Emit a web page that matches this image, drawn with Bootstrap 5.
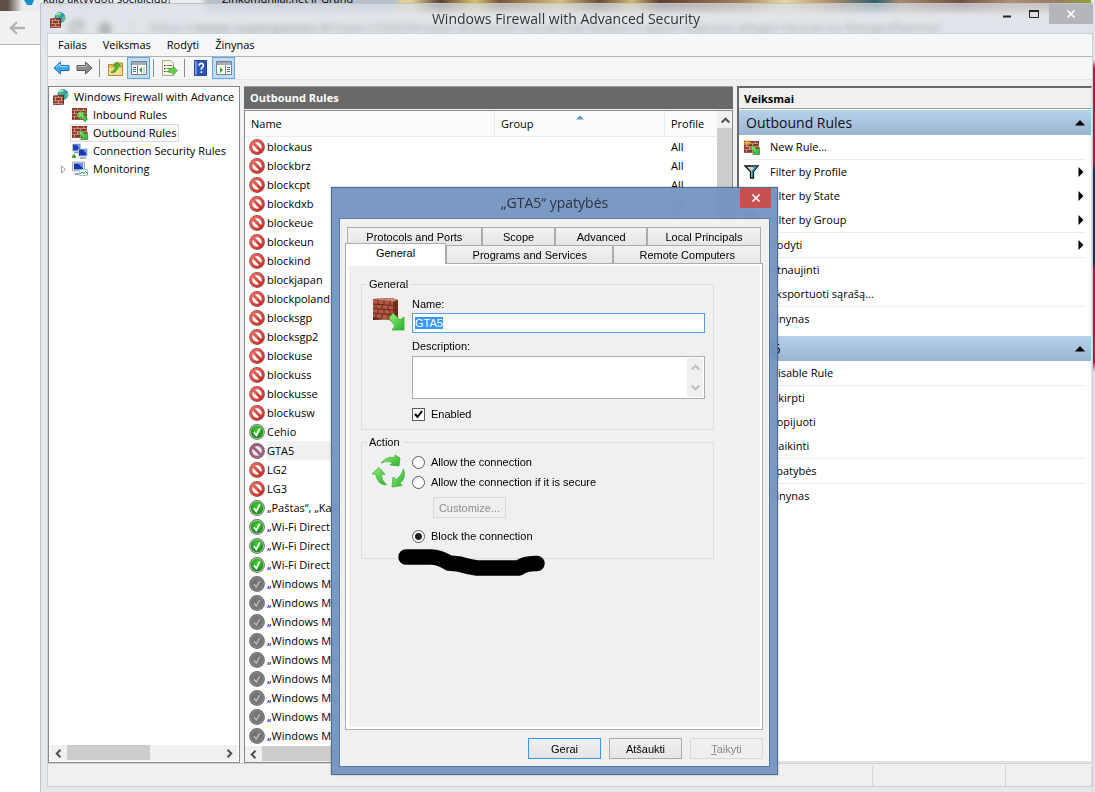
<!DOCTYPE html>
<html lang="lt">
<head>
<meta charset="utf-8">
<meta name="viewport" content="width=device-width, initial-scale=1">
<title>Windows Firewall with Advanced Security</title>
<link href="https://cdn.jsdelivr.net/npm/bootstrap@5.3.0/dist/css/bootstrap.min.css" rel="stylesheet">
<style>
  :root { --ui: "Open Sans", "Noto Sans", sans-serif; --dlg: "Liberation Sans", Arial, sans-serif; }
  body { min-height: 100vh; overflow: hidden; font-family: var(--ui); font-size: 11px; line-height: 18px; color: #000; background: #fff; }
  svg { display: block; flex: none; }
  button { font: inherit; color: inherit; }

  /* browser behind the console */
  .browser-back { position: absolute; inset: 0; overflow: hidden; background: #fff; }
  .wallpaper { height: 11px; background: linear-gradient(90deg, #5f5048 0 8px, #e9ecef 22px 200px, #b9bfca 208px 395px, #ddd193 402px 412px, #5a4234 440px, #d4c46a 475px, #7b5238 500px, #d8c27a 560px, #6b4a35 600px, #cdbb70 632px, #5d3e2e 660px, #a57f5c 740px, #e6d9ac 785px, #b08c68 830px, #2f6170 875px, #a98a6e 900px, #6d5342 960px, #ad9075 1010px, #9a7d60 1060px, #8fae2c 1095px); }
  .tab-names { line-height: 14px; height: 6px; margin-top: -11px; padding-left: 24px; font-size: 11px; gap: 50px; overflow: hidden; }
  .tab-names span { margin-top: -8px; }
  .tab-names svg + span { margin-left: -42px; }
  .browser-bar { margin-top: 5px; height: 34px; border-bottom: 1px solid #b5b5b5; background: #f1f1f2; padding-left: 9px; font-size: 14px; color: #222; white-space: nowrap; }
  .browser-bar .address { margin-left: 10px; }
  .browser-bar .bar-icons { margin-left: 42px; }
  .edge { position: absolute; right: 0; top: 0; bottom: 0; width: 4px; background: linear-gradient(#dfe2e8 0 60px, #b8174b 68px 160px, #0c2f6e 172px 262px, #b8174b 272px 362px, #dfe2e8 372px); }

  /* console window */
  .console { position: absolute; left: 40px; right: 2px; top: 3px; bottom: 0; border: solid #bfc4cb; border-width: 1px 0 0 1px; background: rgba(219, 223, 230, .72); backdrop-filter: blur(3px); padding: 0 0 5px 6px; }
  .console-title { height: 29px; font-size: 14px; line-height: 29px; color: #333; padding-left: 3px; }
  .cap-btn { border: 0; background: none; width: 27px; height: 20px; padding: 0; }
  .cap-close { width: 44px; background: #b4b6bb; margin-left: 1px; }
  .client { border: 1px solid #cdd0d6; background: #f0f0f0; }
  .menu-strip { height: 23px; background: #f5f6f8; border-bottom: 1px solid #b4b4b6; padding-left: 10px; gap: 16px; font-size: 11px; line-height: 21px; }
  .menu-strip a { color: #000; text-decoration: none; }
  .tool-strip { height: 23px; background: #f5f6f8; border-bottom: 1px solid #e4e5e7; padding-left: 2px; }
  .tool { border: 1px solid transparent; background: none; width: 23px; height: 22px; padding: 0; display: flex; align-items: center; justify-content: center; }
  .tool.on { background: #bfdcf9; border-color: #64a5e7; }
  .tool-sep { width: 1px; height: 18px; background: #8d8d8d; margin: 0 4px 0 3px; }
  .panes { display: grid; grid-template-columns: 192px minmax(0, 1fr) 355px; gap: 4px; padding-top: 6px; }
  .pane { background: #fff; border: 1px solid #828790; min-width: 0; }

  .tree { padding: 1px; overflow: hidden; }
  .tree-row { display: flex; align-items: center; height: 18px; white-space: nowrap; gap: 5px; color: #000; text-decoration: none; }
  .tree-top { padding-left: 3px; }
  .tree-child { padding-left: 22px; }
  .tree-pick { border: 1px solid #dadada; background: #f7f7f7; margin-left: -2px; padding: 0 2px 0 1px; height: 18px; }
  .tree-open { padding-left: 9px; }
  .tree-open svg + svg { margin-left: -1px; }
  .scroll-h { height: 16px; background: #f0f0f0; }
  .scroll-h .thumb { height: 15px; background: #cdcdcd; }
  .arrow-cell { width: 17px; height: 16px; display: flex; align-items: center; justify-content: center; }

  .list-title { background: #696969; border: 1px solid #9a9a9a; border-width: 1px 0 0; color: #fff; font-weight: 700; height: 23px; line-height: 22px; padding-left: 6px; font-size: 11px; }
  .rules-table { table-layout: fixed; width: 100%; border-collapse: separate; border-spacing: 0; }
  .rules-table th { font-weight: 400; height: 26px; padding: 0 6px; border: solid #e3eef7; border-width: 0 1px 1px 0; background: #fcfcfc; }
  .rules-table td { height: 19px; padding: 0 6px; white-space: nowrap; overflow: hidden; }
  .rules-table td:first-child { padding: 0 0 0 4px; }
  .rules-table .rule { display: flex; align-items: center; height: 19px; gap: 2px; }
  .rules-table .picked .rule span { background: #f0f0f0; flex: 1; line-height: 19px; }
  .rules-table .picked td + td { background: #f0f0f0; }
  .sort-mark { margin-left: 42px; }
  .scroll-v { width: 15px; background: #f0f0f0; padding-top: 1px; }
  .scroll-v .thumb { background: #cdcdcd; flex: 1; }

  .actions { border: solid; border-width: 2px 1px 2px 2px; border-color: #696969 #e3e3e3 #e3e3e3 #696969; }
  .actions-title { height: 21px; background: #f0f0f0; border-bottom: 1px solid #a0a0a0; font-weight: 700; line-height: 21px; padding-left: 5px; }
  .band { height: 25px; border: 0; background: linear-gradient(#b8d1ea, #9ab4d2); font-size: 14px; line-height: 25px; padding: 0 6px 0 7px; color: #111; }
  .act { display: flex; align-items: center; height: 24px; padding: 0 7px 0 5px; color: #000; text-decoration: none; }
  .act .pic { width: 26px; }
  .act-line { height: 1px; background: #ececec; margin: 0 6px 0 5px; }
  .status { height: 23px; border-top: 1px solid #d2d2d4; }
  .status div { border-right: 1px solid #d5d5d5; margin-top: 2px; }

  /* properties dialog */
  .props { position: absolute; left: 331px; top: 187px; width: 447px; border: 1px solid #4f6d99; background: rgba(112, 145, 190, .93); backdrop-filter: blur(4px); padding: 0 7px 7px; box-shadow: 0 0 2px rgba(0, 0, 0, .3); font-family: var(--dlg); line-height: 14px; }
  .props-title { height: 30px; font-family: var(--ui); font-size: 14px; color: #2c3340; }
  .props-title h2 { font-size: 14px; line-height: 29px; margin: 0; font-weight: 400; flex: 1; text-align: center; padding-left: 30px; }
  .props-close { background: #c75050; border: 0; width: 31px; height: 20px; padding: 0; margin-right: -1px; }
  .props-body { background: #f0f0f0; border: 1px solid #5c7aa6; padding: 8px 6px 7px 5px; }
  .tab-line { display: flex; padding: 0 2px; }
  .tab-key { border: 1px solid #acacac; border-width: 1px 1px 0; background: linear-gradient(#f2f2f2, #e6e6e6); height: 18px; padding: 0; flex: 1; }
  .tab-key.cur { background: #fff; margin: -2px 0 -1px -2px; height: 21px; position: relative; z-index: 1; padding-bottom: 2px; }
  .sheet { border: 1px solid #acacac; background: #f0f0f0; min-height: 467px; padding: 13px 48px 0 15px; box-shadow: inset 3px 2px #fff, inset -2px -2px #fff; }
  .sheet fieldset { border: 1px solid #dcdcdc; }
  .sheet fieldset + fieldset { margin-top: 5px; }
  .sheet legend { float: none; width: auto; font-size: 11px; line-height: 14px; margin: 0 0 0 4px; padding: 0 3px; }
  .group-in { display: flex; padding: 6px 8px 8px 10px; }
  .group-pic { width: 40px; flex: none; }
  .sheet label { display: block; }
  .name-box { display: block; width: 100%; height: 20px; border: 1px solid #569de5; border-radius: 0; padding: 0 2px; font-size: 11px; outline: 0; margin: 2px 0 6px; }
  .name-box::selection { background: #3399ff; color: #fff; }
  .desc-box { border: 1px solid #abadb3; background: #fff; padding: 1px; height: 43px; margin: 3px 0 8px; }
  .desc-box textarea { border: 0; resize: none; outline: 0; flex: 1; overflow: hidden; padding: 2px; height: 39px; }
  .desc-scroll { width: 16px; background: #f0f0f0; padding: 5px 0; }
  .tick { appearance: none; width: 13px; height: 13px; border: 1px solid #5a5a5a; background: #fff; margin: 0 6px 0 0; flex: none; }
  .tick:checked { background: #fff url("data:image/svg+xml,%3Csvg xmlns='http://www.w3.org/2000/svg' viewBox='0 0 11 11'%3E%3Cpath d='M2 5l2.5 3L9 2' fill='none' stroke='%23000' stroke-width='2'/%3E%3C/svg%3E"); }
  .dot { appearance: none; width: 13px; height: 13px; border: 1px solid #5a5a5a; border-radius: 50%; background: #fff; margin: 0 6px 0 0; flex: none; }
  .dot:checked { background: radial-gradient(circle, #222 0 3px, #fff 4px); }
  .opt { display: flex; align-items: center; height: 14px; }
  .opt-next { margin-top: 6px; }
  .key { border: 1px solid #acacac; background: linear-gradient(#f0f0f0, #e5e5e5); width: 73px; height: 21px; padding: 0; }
  .key.go { border: 1px solid #3399ff; }
  .key:disabled { border-color: #d9d9d9; background: #efefef; color: #8c8c8c; }
  .key-custom { display: block; margin: 8px 0 11px 21px; }
  .pb-action { padding-bottom: 15px; }
  .foot-keys { gap: 8px; }
  .mt-px { margin-top: 1px; }
  .mt-gap { margin-top: 5px; }
  .scribble { position: absolute; left: 66px; top: 360px; }
</style>
</head>
<body>

<svg width="0" height="0" class="position-absolute" aria-hidden="true">
  <defs>
    <linearGradient id="gArrow" x1="0" y1="0" x2="1" y2="1"><stop offset="0" stop-color="#9bee7c"/><stop offset="1" stop-color="#22b52a"/></linearGradient>
    <radialGradient id="gOk" cx=".5" cy=".3" r=".7"><stop offset="0" stop-color="#43cf2c"/><stop offset="1" stop-color="#0d8a12"/></radialGradient>
    <linearGradient id="gNo" x1="0" y1="0" x2="1" y2="1"><stop offset="0" stop-color="#ee6a5f"/><stop offset="1" stop-color="#c6302b"/></linearGradient>
    <pattern id="pBrick" width="6" height="6" patternUnits="userSpaceOnUse"><rect width="6" height="6" fill="#c99c8a"/><rect width="5" height="2.2" fill="#a3402c"/><rect x="-3" y="3" width="5" height="2.2" fill="#8b3526"/><rect x="3" y="3" width="5" height="2.2" fill="#8b3526"/></pattern>
  </defs>
  <symbol id="no" viewBox="0 0 16 16"><circle cx="8" cy="8" r="7.9" fill="#8f5553"/><circle cx="8" cy="8" r="6" fill="#fff" stroke="url(#gNo)" stroke-width="2.6"/><path d="M3.800 3.800l8.400 8.400" stroke="url(#gNo)" stroke-width="2.800"/><path d="M5.200 3.600l7.300 7.300" stroke="#8f5553" stroke-width=".6"/></symbol>
  <symbol id="nosel" viewBox="0 0 16 16"><circle cx="8" cy="8" r="7.900" fill="#75607f"/><circle cx="8" cy="8" r="6" fill="#e3eaf5" stroke="#a56078" stroke-width="2.400"/><path d="M3.800 3.800l8.400 8.400" stroke="#a56078" stroke-width="2.800"/></symbol>
  <symbol id="ok" viewBox="0 0 16 16"><circle cx="8" cy="8" r="7.900" fill="#6d7a6d"/><circle cx="8" cy="8" r="7" fill="#b9c4b9"/><circle cx="8" cy="8" r="6.200" fill="url(#gOk)"/><path d="M4.800 8.200l2.500 3 3.600-6.800" fill="none" stroke="#fff" stroke-width="1.900"/></symbol>
  <symbol id="off" viewBox="0 0 16 16"><circle cx="8" cy="8" r="7.900" fill="#6e6e6e"/><circle cx="8" cy="8" r="6.700" fill="#949494"/><circle cx="8" cy="8" r="6" fill="#757575"/><path d="M5 8.200l2.300 2.800 3.400-6" fill="none" stroke="#bdbdbd" stroke-width="1.400"/></symbol>
  <symbol id="fw" viewBox="0 0 16 16"><circle cx="10" cy="5.500" r="5.400" fill="#2b8fd0"/><path d="M7 1.400q3-1.600 5 0l-1 2-2 1-1 3-2-2zM12 5l3-1 .2 3-2 3-1.500-2z" fill="#5fc463"/><path d="M6 3q2-2 4-1.500" stroke="#d6f1ff" fill="none"/><path d="M0 6.500l10-.5 1 1v8.500L1 16l-1-.7z" fill="#6a2a20"/><path d="M.5 7h9.500v8.500H.5z" fill="url(#pBrick)"/></symbol>
  <symbol id="wall" viewBox="0 0 16 14"><path d="M0 0h15v12H0z" fill="#7b3226"/><path d="M.5.5h14v11H.5z" fill="url(#pBrick)"/></symbol>
  <symbol id="in" viewBox="0 0 16 14"><use href="#wall" width="16" height="14"/><path d="M6 4h7l-2 2 4.500 5-2.500 2.700L8.500 9 6 11z" fill="url(#gArrow)" stroke="#26862a" stroke-width=".7"/></symbol>
  <symbol id="out" viewBox="0 0 16 14"><use href="#wall" width="16" height="14"/><path d="M15.500 13.500h-7l2-2-4-4.500L9 4.500l4 4 2.500-2z" fill="url(#gArrow)" stroke="#26862a" stroke-width=".7"/></symbol>
  <symbol id="pcs" viewBox="0 0 16 16"><path d="M.5 1h8v7h-8z" fill="#1e3fc0" stroke="#b9c4cf"/><path d="M4 1.500h4v4z" fill="#7397ec"/><path d="M6.500 6h8.500v7H6.500z" fill="#1938b4" stroke="#b9c4cf"/><path d="M10.500 6.500h4v4z" fill="#7a9ced"/><path d="M8 15h6M2 9.500h4" stroke="#8f9aa6" stroke-width="1.500"/><path d="M0 15v-2l2-2 2 2v2z" fill="#3cab34"/></symbol>
  <symbol id="mon" viewBox="0 0 16 16"><path d="M.5 1h12v9H.5z" fill="#dfe4ea" stroke="#a2adb8"/><path d="M2 2.500h9v6H2z" fill="#1736b5"/><path d="M6 2.500h5v5z" fill="#6d8fe8"/><path d="M2 12l8 0 1 2H3z" fill="#9aa5b0"/><path d="M7.500 8.500h8v6h-8z" fill="#fff" stroke="#9cc7dd"/><path d="M8 13l2-2 2 1.500 1.500-2 2 2" fill="none" stroke="#37a62f"/></symbol>
  <symbol id="cl" viewBox="0 0 9 9"><path d="M6.500.7L2.700 4.500l3.800 3.800" fill="none" stroke="#505050" stroke-width="2"/></symbol>
  <symbol id="cr" viewBox="0 0 9 9"><path d="M2.500.7l3.800 3.800-3.800 3.800" fill="none" stroke="#505050" stroke-width="2"/></symbol>
  <symbol id="cu" viewBox="0 0 9 9"><path d="M.7 6.500l3.800-3.800 3.800 3.800" fill="none" stroke="currentColor" stroke-width="2"/></symbol>
  <symbol id="cd" viewBox="0 0 9 9"><path d="M.7 2.500l3.800 3.800 3.800-3.800" fill="none" stroke="currentColor" stroke-width="2"/></symbol>
  <symbol id="x" viewBox="0 0 10 10"><path d="M1.500 1.500l7 7m0-7l-7 7" stroke="#fff" stroke-width="1.700"/></symbol>
  <symbol id="up" viewBox="0 0 10 6"><path d="M0 5.500L5 0l5 5.500z"/></symbol>
  <symbol id="rt" viewBox="0 0 6 10"><path d="M.5 0L5.500 5l-5 5z"/></symbol>
  <symbol id="funnel" viewBox="0 0 16 14"><path d="M1 1h13L9.500 6.500V13h-3V6.500z" fill="#c7d3d6" stroke="#111" stroke-width="1.300"/><path d="M9 2h3L8.500 6v6" fill="none" stroke="#2f8f96" stroke-width="1.300"/></symbol>
</svg>

<div class="browser-back" aria-hidden="true">
  <div class="wallpaper"></div>
  <div class="tab-names d-flex"><svg width="11" height="5" viewBox="0 0 11 5"><path d="M0 0h10l-2 5H3z" fill="#1b8fd2"/></svg><span>kaip aktyvuoti socialclub?</span><span>Zinkomunijai.net ir Grand</span></div>
  <div class="browser-bar d-flex align-items-center">
    <svg width="17" height="14" viewBox="0 0 17 14"><path d="M8 1L2 7l6 6M2 7h14" fill="none" stroke="#b3b3b3" stroke-width="2.400"/></svg>
    <svg class="bar-icons" width="70" height="16" viewBox="0 0 70 16"><path d="M13 4a6 6 0 1 0 1 6M14 0v6H8" fill="none" stroke="#444" stroke-width="3"/><path d="M29 8l8-7 8 7h-2v7H31V8z" fill="#333"/><path d="M63 2h5l3 3v9h-8z" fill="none" stroke="#777"/></svg>
    <span class="address">https://<b class="fw-semibold">www.supergames.lt</b>/topic/250056-kaip-aktyvuoti-socialclub-kodus-ir-gauti-pakuną-atlygis-teurai-su-fotografijomis/</span>
  </div>
  <div class="edge"></div>
</div>

<main class="console d-flex flex-column">
  <header class="console-title d-flex align-items-start">
    <svg class="mt-2" width="16" height="16"><use href="#fw"/></svg>
    <span class="flex-fill text-center ps-5 ms-4">Windows Firewall with Advanced Security</span>
    <button class="cap-btn" type="button" aria-label="Sumažinti"><svg width="27" height="20"><path d="M9 12.500h8" stroke="#222" stroke-width="2"/></svg></button>
    <button class="cap-btn" type="button" aria-label="Išdidinti"><svg width="27" height="20"><path d="M8.500 6.500h9v7h-9z" fill="none" stroke="#222"/><path d="M8 7h10" stroke="#222" stroke-width="2"/></svg></button>
    <button class="cap-btn cap-close d-flex align-items-center justify-content-center" type="button" aria-label="Uždaryti"><svg width="10" height="10"><use href="#x"/></svg></button>
  </header>

  <div class="client d-flex flex-column flex-fill">
    <nav class="menu-strip d-flex"><a href="#">Failas</a><a href="#">Veiksmas</a><a href="#">Rodyti</a><a href="#">Žinynas</a></nav>
    <div class="tool-strip d-flex align-items-end">
      <button class="tool" type="button" aria-label="Atgal"><svg width="17" height="14" viewBox="0 0 17 14"><path d="M1 7l6.500-6v3.500H16v5H7.500V13z" fill="#3aa9ea" stroke="#1d73b8"/><path d="M3 6.500L7 3v2.500h8" fill="none" stroke="#a5dcfa"/></svg></button>
      <button class="tool" type="button" aria-label="Pirmyn"><svg width="17" height="14" viewBox="0 0 17 14"><path d="M16 7L9.500 1v3.500H1v5h8.500V13z" fill="#8b8b8b" stroke="#5f5f5f"/><path d="M2 5.500h8.500V3" fill="none" stroke="#bbb"/></svg></button>
      <i class="tool-sep align-self-center"></i>
      <button class="tool" type="button" aria-label="Aukštyn"><svg width="15" height="15" viewBox="0 0 15 15"><path d="M.5 3.500h5l1-1.500h8v12.500H.5z" fill="#e6bd55" stroke="#b98d2d"/><path d="M1 7h13v7H1z" fill="#f7dd8e"/><path d="M3 11q4-1 4.500-6H5L9 1l4 4h-2.500Q9 11 4 12z" fill="#4fb82f" stroke="#2f8c1c" stroke-width=".6"/></svg></button>
      <button class="tool on" type="button" aria-label="Konsolės medis"><svg width="16" height="14" viewBox="0 0 16 14"><path d="M.5.5h15v13H.5z" fill="#fff" stroke="#777f8a"/><path d="M1 1h14v3H1z" fill="#a3abb5"/><path d="M6.500 4v9" stroke="#777f8a"/><path d="M2 6.500h3M2 8.500h3M2 10.500h3" stroke="#4c6e9b"/><path d="M11 6v6L8 9z" fill="#30a52b"/><path d="M13 5.500v8" stroke="#aab"/></svg></button>
      <i class="tool-sep align-self-center"></i>
      <button class="tool" type="button" aria-label="Eksportuoti"><svg width="17" height="16" viewBox="0 0 17 16"><path d="M1.500.5h8l3 3v12h-11z" fill="#fbf9e3" stroke="#aaa78a"/><path d="M3 5.500h1.500M3 8.500h1.500M3 11.500h1.500" stroke="#333"/><path d="M5.500 5.500H11M5.500 8.500H9M5.500 11.500H9" stroke="#777"/><path d="M8 8.500h4V6l4.500 4.500L12 15v-2.500H8z" fill="#5cd63f" stroke="#2f9c22" stroke-width=".6"/></svg></button>
      <i class="tool-sep align-self-center"></i>
      <button class="tool" type="button" aria-label="Žinynas"><svg width="13" height="16" viewBox="0 0 14 17"><path d="M.5.5h13v16H.5z" fill="#2f55bd" stroke="#1b3479"/><path d="M1 1h2v15H1z" fill="#7c9bea"/><path d="M5.500 6q0-2.500 2.300-2.500T10 6q0 1.500-2 2.800V10.500M8 12v2" fill="none" stroke="#fff" stroke-width="1.700"/></svg></button>
      <button class="tool on" type="button" aria-label="Veiksmų sritis"><svg width="16" height="14" viewBox="0 0 16 14"><path d="M.5.5h15v13H.5z" fill="#fff" stroke="#777f8a"/><path d="M1 1h14v3H1z" fill="#a3abb5"/><path d="M9.500 4v9" stroke="#777f8a"/><path d="M11 6.500h3M11 8.500h3M11 10.500h3" stroke="#4c6e9b"/><path d="M4 6v6l3-3z" fill="#30a52b"/></svg></button>
    </div>

    <div class="panes flex-fill">
      <nav class="pane tree d-flex flex-column" aria-label="Konsolės medis">
        <a class="tree-row tree-top" href="#"><svg width="16" height="16"><use href="#fw"/></svg><span>Windows Firewall with Advance</span></a>
        <a class="tree-row tree-child" href="#"><svg width="16" height="14"><use href="#in"/></svg><span>Inbound Rules</span></a>
        <a class="tree-row tree-child" href="#"><span class="tree-row tree-pick"><svg width="16" height="14"><use href="#out"/></svg><span>Outbound Rules</span></span></a>
        <a class="tree-row tree-child" href="#"><svg width="16" height="16"><use href="#pcs"/></svg><span>Connection Security Rules</span></a>
        <a class="tree-row tree-open" href="#"><svg width="9" height="9" viewBox="0 0 9 9"><path d="M2.500 1v7l4-3.500z" fill="#fff" stroke="#9a9a9a"/></svg><svg width="16" height="16"><use href="#mon"/></svg><span>Monitoring</span></a>
        <div class="scroll-h d-flex mt-auto"><span class="arrow-cell"><svg width="9" height="9"><use href="#cl"/></svg></span><span class="thumb" style="width:44%"></span><span class="arrow-cell ms-auto"><svg width="9" height="9"><use href="#cr"/></svg></span></div>
      </nav>

      <section class="d-flex flex-column">
        <div class="list-title">Outbound Rules</div>
        <div class="pane d-flex flex-column flex-fill mt-px">
          <div class="d-flex flex-fill">
            <table class="rules-table align-self-start">
              <colgroup><col style="width:250px"><col style="width:170px"><col></colgroup>
              <thead><tr><th>Name</th><th><span class="d-flex">Group<svg class="sort-mark" width="8" height="5" viewBox="0 0 8 5"><path d="M0 4.500L4 .5l4 4z" fill="#5f9cb8"/></svg></span></th><th class="border-end-0">Profile</th></tr></thead>
              <tbody>
                <tr><td><div class="rule"><svg width="16" height="16"><use href="#no"/></svg><span>blockaus</span></div></td><td></td><td>All</td></tr>
                <tr><td><div class="rule"><svg width="16" height="16"><use href="#no"/></svg><span>blockbrz</span></div></td><td></td><td>All</td></tr>
                <tr><td><div class="rule"><svg width="16" height="16"><use href="#no"/></svg><span>blockcpt</span></div></td><td></td><td>All</td></tr>
                <tr><td><div class="rule"><svg width="16" height="16"><use href="#no"/></svg><span>blockdxb</span></div></td><td></td><td>All</td></tr>
                <tr><td><div class="rule"><svg width="16" height="16"><use href="#no"/></svg><span>blockeue</span></div></td><td></td><td>All</td></tr>
                <tr><td><div class="rule"><svg width="16" height="16"><use href="#no"/></svg><span>blockeun</span></div></td><td></td><td></td></tr>
                <tr><td><div class="rule"><svg width="16" height="16"><use href="#no"/></svg><span>blockind</span></div></td><td></td><td></td></tr>
                <tr><td><div class="rule"><svg width="16" height="16"><use href="#no"/></svg><span>blockjapan</span></div></td><td></td><td></td></tr>
                <tr><td><div class="rule"><svg width="16" height="16"><use href="#no"/></svg><span>blockpoland</span></div></td><td></td><td></td></tr>
                <tr><td><div class="rule"><svg width="16" height="16"><use href="#no"/></svg><span>blocksgp</span></div></td><td></td><td></td></tr>
                <tr><td><div class="rule"><svg width="16" height="16"><use href="#no"/></svg><span>blocksgp2</span></div></td><td></td><td></td></tr>
                <tr><td><div class="rule"><svg width="16" height="16"><use href="#no"/></svg><span>blockuse</span></div></td><td></td><td></td></tr>
                <tr><td><div class="rule"><svg width="16" height="16"><use href="#no"/></svg><span>blockuss</span></div></td><td></td><td></td></tr>
                <tr><td><div class="rule"><svg width="16" height="16"><use href="#no"/></svg><span>blockusse</span></div></td><td></td><td></td></tr>
                <tr><td><div class="rule"><svg width="16" height="16"><use href="#no"/></svg><span>blockusw</span></div></td><td></td><td></td></tr>
                <tr><td><div class="rule"><svg width="16" height="16"><use href="#ok"/></svg><span>Cehio</span></div></td><td></td><td></td></tr>
                <tr class="picked"><td><div class="rule"><svg width="16" height="16"><use href="#nosel"/></svg><span>GTA5</span></div></td><td></td><td></td></tr>
                <tr><td><div class="rule"><svg width="16" height="16"><use href="#no"/></svg><span>LG2</span></div></td><td></td><td></td></tr>
                <tr><td><div class="rule"><svg width="16" height="16"><use href="#no"/></svg><span>LG3</span></div></td><td></td><td></td></tr>
                <tr><td><div class="rule"><svg width="16" height="16"><use href="#ok"/></svg><span>„Paštas“, „Kalendorius“</span></div></td><td></td><td></td></tr>
                <tr><td><div class="rule"><svg width="16" height="16"><use href="#ok"/></svg><span>„Wi-Fi Direct</span></div></td><td></td><td></td></tr>
                <tr><td><div class="rule"><svg width="16" height="16"><use href="#ok"/></svg><span>„Wi-Fi Direct</span></div></td><td></td><td></td></tr>
                <tr><td><div class="rule"><svg width="16" height="16"><use href="#ok"/></svg><span>„Wi-Fi Direct</span></div></td><td></td><td></td></tr>
                <tr><td><div class="rule"><svg width="16" height="16"><use href="#off"/></svg><span>„Windows Media</span></div></td><td></td><td></td></tr>
                <tr><td><div class="rule"><svg width="16" height="16"><use href="#off"/></svg><span>„Windows Media</span></div></td><td></td><td></td></tr>
                <tr><td><div class="rule"><svg width="16" height="16"><use href="#off"/></svg><span>„Windows Media</span></div></td><td></td><td></td></tr>
                <tr><td><div class="rule"><svg width="16" height="16"><use href="#off"/></svg><span>„Windows Media</span></div></td><td></td><td></td></tr>
                <tr><td><div class="rule"><svg width="16" height="16"><use href="#off"/></svg><span>„Windows Media</span></div></td><td></td><td></td></tr>
                <tr><td><div class="rule"><svg width="16" height="16"><use href="#off"/></svg><span>„Windows Media</span></div></td><td></td><td></td></tr>
                <tr><td><div class="rule"><svg width="16" height="16"><use href="#off"/></svg><span>„Windows Media</span></div></td><td></td><td></td></tr>
                <tr><td><div class="rule"><svg width="16" height="16"><use href="#off"/></svg><span>„Windows Media</span></div></td><td></td><td></td></tr>
                <tr><td><div class="rule"><svg width="16" height="16"><use href="#off"/></svg><span>„Windows Media</span></div></td><td></td><td></td></tr>
              </tbody>
            </table>
            <div class="scroll-v d-flex flex-column flex-shrink-0"><span class="arrow-cell"><svg width="9" height="9" color="#505050"><use href="#cu"/></svg></span><span class="thumb"></span></div>
          </div>
          <div class="scroll-h d-flex"><span class="arrow-cell"><svg width="9" height="9"><use href="#cl"/></svg></span><span class="thumb" style="width:70%"></span></div>
        </div>
      </section>

      <aside class="pane actions">
        <div class="actions-title">Veiksmai</div>
        <div class="band d-flex align-items-center justify-content-between mt-px">Outbound Rules<svg width="10" height="6"><use href="#up"/></svg></div>
        <a class="act" href="#"><span class="pic"><svg width="16" height="16" viewBox="0 0 16 16"><use href="#out" y="2" width="16" height="14"/><path d="M3 0v7M-.5 3.500h7M.5 1l5 5m0-5l-5 5" stroke="#f4b73b"/></svg></span>New Rule...</a>
        <div class="act-line"></div>
        <a class="act" href="#"><span class="pic"><svg width="16" height="14"><use href="#funnel"/></svg></span>Filter by Profile<svg class="ms-auto" width="6" height="10"><use href="#rt"/></svg></a>
        <a class="act" href="#"><span class="pic"><svg width="16" height="14"><use href="#funnel"/></svg></span>Filter by State<svg class="ms-auto" width="6" height="10"><use href="#rt"/></svg></a>
        <a class="act" href="#"><span class="pic"><svg width="16" height="14"><use href="#funnel"/></svg></span>Filter by Group<svg class="ms-auto" width="6" height="10"><use href="#rt"/></svg></a>
        <div class="act-line"></div>
        <a class="act" href="#"><span class="pic"></span>Rodyti<svg class="ms-auto" width="6" height="10"><use href="#rt"/></svg></a>
        <div class="act-line"></div>
        <a class="act" href="#"><span class="pic"></span>Atnaujinti</a>
        <a class="act" href="#"><span class="pic"></span>Eksportuoti sąrašą...</a>
        <div class="act-line"></div>
        <a class="act" href="#"><span class="pic"></span>Žinynas</a>
        <div class="band d-flex align-items-center justify-content-between mt-gap">GTA5<svg width="10" height="6"><use href="#up"/></svg></div>
        <a class="act" href="#"><span class="pic"></span>Disable Rule</a>
        <div class="act-line"></div>
        <a class="act" href="#"><span class="pic"></span>Iškirpti</a>
        <a class="act" href="#"><span class="pic"></span>Kopijuoti</a>
        <a class="act" href="#"><span class="pic"></span>Naikinti</a>
        <div class="act-line"></div>
        <a class="act" href="#"><span class="pic"></span>Ypatybės</a>
        <div class="act-line"></div>
        <a class="act" href="#"><span class="pic"></span>Žinynas</a>
      </aside>
    </div>
    <footer class="status d-flex"><div class="flex-fill"></div><div style="width:133px"></div><div style="width:86px"></div></footer>
  </div>
</main>

<section class="props" role="dialog" aria-labelledby="propsTitle">
  <header class="props-title d-flex align-items-start"><h2 id="propsTitle">„GTA5“ ypatybės</h2><button class="props-close d-flex align-items-center justify-content-center" type="button" aria-label="Uždaryti"><svg width="10" height="10"><use href="#x"/></svg></button></header>
  <form class="props-body">
    <div class="tab-line" role="tablist">
      <button class="tab-key" type="button" role="tab" style="flex-grow:135">Protocols and Ports</button><button class="tab-key" type="button" role="tab" style="flex-grow:73">Scope</button><button class="tab-key" type="button" role="tab" style="flex-grow:91">Advanced</button><button class="tab-key" type="button" role="tab" style="flex-grow:114">Local Principals</button>
    </div>
    <div class="tab-line" role="tablist">
      <button class="tab-key cur" type="button" role="tab" aria-selected="true" style="flex-grow:100">General</button><button class="tab-key" type="button" role="tab" style="flex-grow:167">Programs and Services</button><button class="tab-key" type="button" role="tab" style="flex-grow:147">Remote Computers</button>
    </div>
    <div class="sheet">
      <fieldset>
        <legend>General</legend>
        <div class="group-in">
          <div class="group-pic"><svg width="34" height="34" viewBox="0 0 34 34"><path d="M1 2l19-1 6 2v19L1 23z" fill="#5d2318"/><path d="M1 2.500l20 1.500v20L1 20z" fill="#b55a44"/><path d="M21 4l5-1v19l-5 2z" fill="#7c2f21"/><path d="M1 2l19-1 6 2-5 1.500z" fill="#cf8a76"/><path d="M1 7l20 1.500M1 11.500l20 1.500M1 16l20 1.700M21 8.500l5-1M21 13l5-1M21 17.700l5-1.500M6 3v4.500M12 3.500v4.700M18 3.700v4.800M4 7.500v4M10 8v4.300M16 8.200v4.500M6 12v4.500M12 12.500v4.500M18 12.700v4.800M4 16.500v4M10 17v4.500M16 17.300V22" stroke="#5b2419" stroke-width=".9" fill="none"/><path d="M17 21l4-5 7 7 4-3v13H20l3-4z" fill="url(#gArrow)" stroke="#2fae2c" stroke-width=".8"/></svg></div>
          <div class="flex-fill">
            <label for="ruleName">Name:</label>
            <input class="name-box" id="ruleName" type="text" value="GTA5">
            <label for="ruleDesc">Description:</label>
            <div class="desc-box d-flex"><textarea id="ruleDesc"></textarea><div class="desc-scroll d-flex flex-column align-items-center justify-content-between"><svg width="9" height="9" color="#bfbfbf"><use href="#cu"/></svg><svg width="9" height="9" color="#bfbfbf"><use href="#cd"/></svg></div></div>
            <div class="opt"><input class="tick" id="ruleOn" type="checkbox" checked><label for="ruleOn">Enabled</label></div>
          </div>
        </div>
      </fieldset>
      <fieldset>
        <legend>Action</legend>
        <div class="group-in pb-action">
          <div class="group-pic"><svg width="34" height="34" viewBox="0 0 34 34"><g fill="url(#gArrow)" stroke="#35a92f" stroke-width=".7"><path d="M9 8q6-7 14-5.500V0l5 3-1 8-9-1 3-2.500Q14 5 9 8z"/><path d="M31.500 14q3 9-3.500 14l2 2.500-10 1.500 1-10 3 2.500q5-3 7.500-10.500z"/><path d="M0 19l7-6.500 6 7-3.500-.5q-.5 6 5 11-9 0-11-11z"/></g></svg></div>
          <div class="flex-fill">
            <div class="opt"><input class="dot" id="actAllow" name="act" type="radio"><label for="actAllow">Allow the connection</label></div>
            <div class="opt opt-next"><input class="dot" id="actSecure" name="act" type="radio"><label for="actSecure">Allow the connection if it is secure</label></div>
            <button class="key key-custom" type="button" disabled>Customize...</button>
            <div class="opt"><input class="dot" id="actBlock" name="act" type="radio" checked><label for="actBlock">Block the connection</label></div>
          </div>
        </div>
      </fieldset>
    </div>
    <div class="d-flex justify-content-end pt-2 foot-keys"><button class="key go" type="submit">Gerai</button><button class="key" type="button">Atšaukti</button><button class="key" type="button" disabled><u>T</u>aikyti</button></div>
  </form>
  <svg class="scribble" width="150" height="30" viewBox="0 0 150 30" aria-hidden="true"><path d="M8 9h25q8 0 18 6l10 1q10 3 18 4h42q6-5 18-4.500" fill="none" stroke="#000" stroke-width="15.500" stroke-linecap="round" stroke-linejoin="round"/></svg>
</section>

<script src="https://cdn.jsdelivr.net/npm/bootstrap@5.3.0/dist/js/bootstrap.bundle.min.js"></script>
<script>
  const nameBox = document.getElementById('ruleName');
  nameBox.focus();
  nameBox.select();
</script>
</body>
</html>
